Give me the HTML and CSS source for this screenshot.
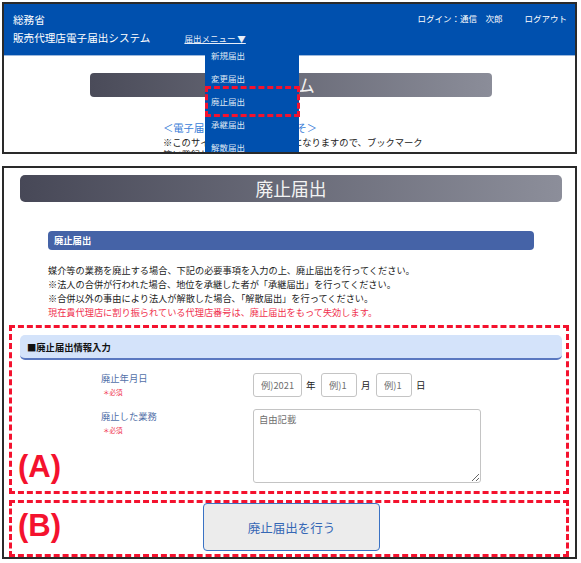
FILE: index.html
```html
<!DOCTYPE html>
<html lang="ja">
<head>
    <meta charset="UTF-8">
    <meta name="viewport" content="width=device-width, initial-scale=1.0">
    <title>廃止届出</title>
    <link rel="stylesheet" href="styles.css">
</head>
<body>
    <!-- 上段：メニュー -->
    <div class="shot shot-top">
        <header class="site-head">
            <div class="brand">
                <div>総務省</div>
                <div class="brand-row">
                    <span>販売代理店電子届出システム</span>
                    <a class="menu-link">届出メニュー ▼</a>
                </div>
            </div>
            <div class="user">
                <span>ログイン：通信　次郎</span>
                <span>ログアウト</span>
            </div>
        </header>
        <div class="home">
            <div class="home-title">届出システム</div>
            <div class="home-text">
                <p class="welcome">＜電子届出システムへようこそ＞</p>
                <p class="note">※このサイトはシステムの入口になりますので、ブックマーク等に登録してご利用ください。</p>
            </div>
        </div>
        <ul class="dropdown">
            <li>新規届出</li>
            <li>変更届出</li>
            <li>廃止届出</li>
            <li>承継届出</li>
            <li>解散届出</li>
        </ul>
        <div class="mark-menu"></div>
    </div>

    <!-- 下段：廃止届出 -->
    <div class="shot shot-form">
        <div class="page-title">廃止届出</div>
        <div class="section-bar">廃止届出</div>
        <div class="intro">
            <p>媒介等の業務を廃止する場合、下記の必要事項を入力の上、廃止届出を行ってください。</p>
            <p>※法人の合併が行われた場合、地位を承継した者が「承継届出」を行ってください。</p>
            <p>※合併以外の事由により法人が解散した場合、「解散届出」を行ってください。</p>
            <p class="warn">現在貴代理店に割り振られている代理店番号は、廃止届出をもって失効します。</p>
        </div>

        <div class="mark-box box-a">
            <div class="sub-bar">■廃止届出情報入力</div>
            <div class="fields">
                <div class="label">廃止年月日<span class="req">＊必須</span></div>
                <div class="date-row">
                    <input class="in-year" type="text" placeholder="例)2021"><span class="unit">年</span>
                    <input class="in-day" type="text" placeholder="例)1"><span class="unit">月</span>
                    <input class="in-day" type="text" placeholder="例)1"><span class="unit">日</span>
                </div>
                <div class="label">廃止した業務<span class="req">＊必須</span></div>
                <textarea placeholder="自由記載"></textarea>
            </div>
            <span class="tag">(A)</span>
        </div>

        <div class="mark-box box-b">
            <button class="submit">廃止届出を行う</button>
            <span class="tag">(B)</span>
        </div>
    </div>
</body>
</html>
```

FILE: styles.css
```css
* {
    margin: 0;
    padding: 0;
    box-sizing: border-box;
}
body {
    background: #fff;
    padding: 2px;
    font-family: "Noto Sans CJK JP", "Noto Sans", sans-serif;
    color: #222;
}
.shot {
    width: 575px;
    border: 2px solid #2a2a2a;
    position: relative;
    overflow: hidden;
    background: #fff;
}

/* ---------- 上段 ---------- */
.shot-top {
    height: 152px;
}
.site-head {
    height: 52px;
    background: #0050ae;
    border-bottom: 1px solid #9cb8dc;
    color: #fff;
    display: flex;
    justify-content: space-between;
    padding: 7px 8px 0 9px;
}
.brand {
    font-size: 10.6px;
    line-height: 18px;
}
.brand-row {
    display: flex;
    align-items: center;
    gap: 34px;
}
.menu-link {
    font-size: 8.5px;
    text-decoration: underline;
    color: #e8eef8;
}
.user {
    font-size: 8.5px;
    line-height: 18px;
    margin-top: -2px;
    display: flex;
    gap: 22px;
}
.home {
    padding-top: 17px;
}
.home-title {
    margin-left: 86px;
    width: 402px;
    height: 24px;
    border-radius: 4px;
    background: linear-gradient(to right, #4a4b59, #8b8d99);
    color: #f2f2f2;
    font-size: 17px;
    line-height: 24px;
    text-align: center;
    padding-right: 54px;
}
.home-text {
    margin: 24px 0 0 159px;
    width: 262px;
}
.welcome {
    color: #3a7ed8;
    font-size: 10.3px;
    line-height: 14px;
}
.note {
    font-size: 9.3px;
    line-height: 12px;
    margin-top: 1px;
}
.dropdown {
    list-style: none;
    position: absolute;
    left: 201px;
    top: 40px;
    width: 94px;
    height: 120px;
    background: #0050ae;
    padding-left: 6px;
}
.dropdown li {
    height: 23px;
    line-height: 23px;
    font-size: 8.5px;
    color: #dfe7f3;
}
.mark-menu {
    position: absolute;
    left: 201px;
    top: 82px;
    width: 95px;
    height: 31px;
    border: 3px dashed #f4122e;
}

/* ---------- 下段 ---------- */
.shot-form {
    margin-top: 12px;
    height: 393px;
}
.page-title {
    margin: 7px 13px 0 16px;
    height: 27px;
    border-radius: 5px;
    background: linear-gradient(to right, #474857, #8c8e9a);
    color: #f3f3f3;
    font-size: 17.8px;
    line-height: 27px;
    text-align: center;
}
.section-bar {
    margin: 29px 41px 0 44px;
    height: 19px;
    border-radius: 4px;
    background: #4563a7;
    color: #fff;
    font-size: 9.3px;
    font-weight: bold;
    line-height: 19px;
    padding-left: 6px;
}
.intro {
    margin-top: 13px;
    padding-left: 44px;
    font-size: 9.2px;
    line-height: 14px;
}
.intro .warn {
    color: #f0304d;
}
.mark-box {
    position: relative;
    margin: 6px 6px 0 5px;
    border: 3px dashed #f4122e;
}
.box-a {
    padding: 7px 4px 8px 8px;
}
.sub-bar {
    height: 25px;
    background: #d4e3fa;
    border-bottom: 2px solid #5a78c0;
    border-radius: 5px;
    font-size: 9.3px;
    font-weight: bold;
    line-height: 24px;
    padding-left: 7px;
    color: #111;
}
.fields {
    margin-top: 11px;
    padding-left: 81px;
    display: grid;
    grid-template-columns: 152px auto;
    row-gap: 10px;
}
.label {
    color: #5270a8;
    font-size: 9.3px;
    line-height: 14px;
}
.req {
    display: block;
    color: #f0304d;
    font-size: 6.5px;
    line-height: 14px;
    padding-left: 2px;
}
.date-row {
    display: flex;
    align-items: center;
}
.date-row input {
    height: 24px;
    border: 1px solid #c4c4c4;
    border-radius: 3px;
    font-family: inherit;
    font-size: 9.3px;
    padding-left: 7px;
    margin-right: 4px;
}
.in-year {
    width: 49px;
}
.in-day {
    width: 36px;
}
.unit {
    font-size: 9.5px;
    width: 10px;
    margin-right: 5px;
}
textarea {
    display: block;
    width: 228px;
    height: 74px;
    border: 1px solid #c4c4c4;
    border-radius: 3px;
    font-family: inherit;
    font-size: 9.3px;
    padding: 2px 5px;
    resize: both;
}
::placeholder {
    color: #6f6f6f;
}
.tag {
    position: absolute;
    left: 6px;
    color: #f4122e;
    font-family: "Liberation Sans", Arial, sans-serif;
    font-weight: bold;
    font-size: 31px;
    line-height: 34px;
}
.box-a .tag {
    top: 122px;
}
.box-b {
    height: 57px;
    display: flex;
    justify-content: center;
    padding-left: 5px;
}
.box-b .tag {
    top: 6px;
}
.submit {
    width: 177px;
    height: 48px;
    background: #ececec;
    border: 1.5px solid #3a72c4;
    border-radius: 4px;
    color: #3567b5;
    font-family: inherit;
    font-size: 12.5px;
}
```
